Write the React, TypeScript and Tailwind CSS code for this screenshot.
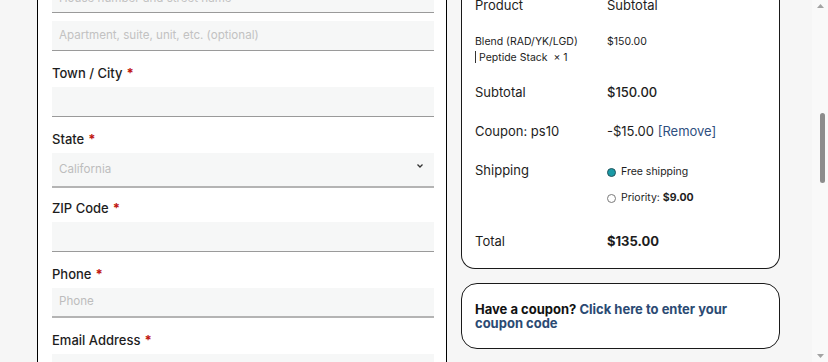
const Req = () => <span className="ml-[4px] font-bold text-[#c0160f]">*</span>;

const Label = ({ text }: { text: string }) => (
  <p className="h-[20px] text-[13px] font-medium leading-[20px] text-[#1d1d1d]">
    {text}
    <Req />
  </p>
);

const Input = ({ placeholder = "", thick = false }: { placeholder?: string; thick?: boolean }) => (
  <div
    className={
      thick
        ? "flex h-[30px] items-center border-b-2 border-[#b4b4b4] bg-[#f6f7f7] px-[7px] text-[11.6px] text-[#bdbdbd]"
        : "flex h-[30px] items-center border-b border-[#9a9a9a] bg-[#f6f7f7] px-[7px] text-[11.6px] text-[#c2c2c2]"
    }
  >
    {placeholder}
  </div>
);

const Field = ({ label, placeholder, thick }: { label: string; placeholder?: string; thick?: boolean }) => (
  <div className="mt-[12px]">
    <Label text={label} />
    <div className="mt-[4px]">
      <Input placeholder={placeholder} thick={thick} />
    </div>
  </div>
);

const Radio = ({ checked }: { checked?: boolean }) =>
  checked ? (
    <span className="inline-block h-[9px] w-[9px] rounded-full border-[1.5px] border-[#24555e] bg-[#1a9aa6]" />
  ) : (
    <span className="inline-block h-[9px] w-[9px] rounded-full border border-[#7a7a7a] bg-white" />
  );

const Row = ({ left, children }: { left: React.ReactNode; children: React.ReactNode }) => (
  <div className="grid grid-cols-[132px_1fr] text-[13px] leading-[20px] text-[#1d1d1d]">
    <div>{left}</div>
    <div>{children}</div>
  </div>
);

const App = () => {
  return (
    <div
      className="flex h-[362px] w-[828px] overflow-hidden bg-[#f6f6f6]"
      style={{ fontFamily: "Inter, 'Liberation Sans', sans-serif" }}
    >
      <div className="w-[37px] shrink-0" />

      {/* billing form */}
      <div className="-mt-[30px] h-[420px] w-[410px] shrink-0 border-x-[1.5px] border-black bg-white pl-[14px] pr-[12px]">
        <div className="mt-[13px]">
          <div className="flex h-[30px] items-end border-b border-[#9a9a9a] bg-[#f6f7f7] px-[7px] pb-[7px] text-[11.6px] leading-[14px] text-[#c2c2c2]">
            House number and street name
          </div>
        </div>
        <div className="mt-[8px]">
          <Input placeholder="Apartment, suite, unit, etc. (optional)" />
        </div>
        <Field label="Town / City" />
        <div className="mt-[12px]">
          <Label text="State" />
          <div className="mt-[4px] flex h-[35px] items-center justify-between border-b-2 border-[#b4b4b4] bg-[#f6f7f7] pl-[7px] pr-[10px] text-[11.6px] text-[#bdbdbd]">
            <span>California</span>
            <svg width="8" height="6" viewBox="0 0 8 6" className="-mt-[8px]">
              <path d="M1.5 1.5 L4 4 L6.5 1.5" fill="none" stroke="#333" strokeWidth="1.3" />
            </svg>
          </div>
        </div>
        <div className="mt-[10px]">
          <Label text="ZIP Code" />
          <div className="mt-[4px]">
            <Input />
          </div>
        </div>
        <Field label="Phone" placeholder="Phone" thick />
        <Field label="Email Address" />
      </div>

      <div className="w-[14px] shrink-0" />

      {/* order review */}
      <div className="flex w-[319px] shrink-0 flex-col">
        <div className="-mt-[20px] flex flex-col rounded-b-[14px] border-[1.5px] border-t-0 border-[#1a1a1a] bg-white px-[13px] pb-[17px] pt-[15px]">
          <Row left="Product">Subtotal</Row>
          <div className="mt-[20px] grid grid-cols-[132px_1fr] text-[10.5px] leading-[14px] text-[#1d1d1d]">
            <div>
              <p>Blend (RAD/YK/LGD)</p>
              <p>
                <span className="mr-[3px] inline-block h-[12px] w-px translate-y-[2px] bg-[#333]" />
                Peptide Stack&nbsp;&nbsp;× 1
              </p>
            </div>
            <div>$150.00</div>
          </div>
          <div className="mt-[17px]">
            <Row left="Subtotal">
              <span className="font-medium">$150.00</span>
            </Row>
          </div>
          <div className="mt-[19px]">
            <Row left="Coupon: ps10">
              -$15.00 <span className="text-[#2f4f7f]">[Remove]</span>
            </Row>
          </div>
          <div className="mt-[19px]">
            <Row left="Shipping">
              <div className="flex flex-col gap-[12px] pt-[5px] text-[10.5px] leading-[14px]">
                <div className="flex items-center gap-[5px]">
                  <Radio checked />
                  <span>Free shipping</span>
                </div>
                <div className="flex items-center gap-[5px]">
                  <Radio />
                  <span>
                    Priority: <b>$9.00</b>
                  </span>
                </div>
              </div>
            </Row>
          </div>
          <div className="mt-[26px]">
            <Row left="Total">
              <span className="font-bold">$135.00</span>
            </Row>
          </div>
        </div>

        <div className="mt-[14px] flex h-[66px] flex-col justify-center rounded-[16px] border-[1.5px] border-[#1a1a1a] bg-white px-[13px] text-[13px] font-bold leading-[13.5px] text-[#111]">
          <p className="pt-[1px]">
            Have a coupon? <span className="text-[#2b4a73]">Click here to enter your coupon code</span>
          </p>
        </div>
      </div>

      <div className="w-[32px] shrink-0" />

      {/* scrollbar */}
      <div className="flex w-[16px] shrink-0 flex-col items-center justify-between bg-[#f9f9f9] py-[4px]">
        <svg width="7" height="4" viewBox="0 0 7 4">
          <path d="M0 4 L3.5 0 L7 4 Z" fill="#a3a3a3" />
        </svg>
        <svg width="7" height="4" viewBox="0 0 7 4">
          <path d="M0 0 L3.5 4 L7 0 Z" fill="#a3a3a3" />
        </svg>
      </div>
      <div className="pointer-events-none fixed left-[820px] top-[113px] h-[70px] w-[5px] rounded-full bg-[#8c8c8c]" />
    </div>
  );
};

export default App;
